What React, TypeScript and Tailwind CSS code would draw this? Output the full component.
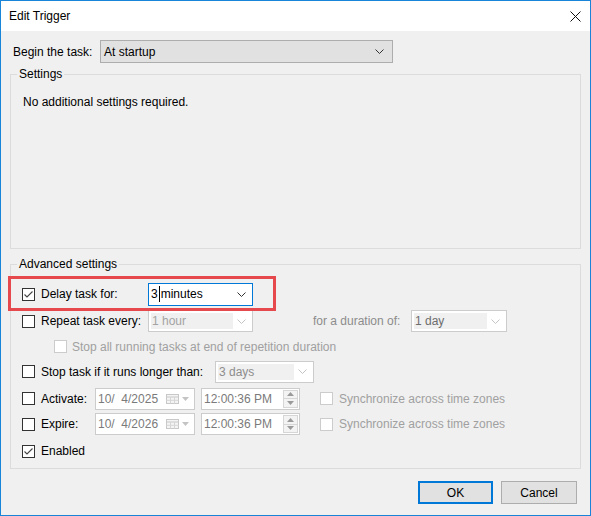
import React from "react";

const font = "font-['Liberation_Sans',Arial,sans-serif]";

function Chevron({ color = "#333" }: { color?: string }) {
  return (
    <svg width="9" height="5" viewBox="0 0 9 5" className="block">
      <polyline points="0.5,0.5 4.5,4.5 8.5,0.5" fill="none" stroke={color} strokeWidth="1" />
    </svg>
  );
}

function Check({ checked = false, disabled = false }: { checked?: boolean; disabled?: boolean }) {
  return (
    <span
      className={`w-[13px] h-[13px] shrink-0 border bg-white flex items-center justify-center ${
        disabled ? "border-[#cccccc]" : "border-[#333333]"
      }`}
    >
      {checked && (
        <svg width="11" height="11" viewBox="0 0 11 11" className="block">
          <polyline points="1.5,5.5 4,8 9.5,2.5" fill="none" stroke="#444" strokeWidth="1.1" />
        </svg>
      )}
    </span>
  );
}

function DisabledCombo({ text, width, color }: { text: string; width: string; color: string }) {
  return (
    <div className={`${width} h-[22px] border border-[#cccccc] bg-white flex items-stretch p-[2px] shrink-0`}>
      <div className="flex-1 bg-[#f0f0f0] flex items-center pl-[1px]" style={{ color }}>
        {text}
      </div>
      <div className="w-[17px] flex items-center justify-center">
        <Chevron color="#c4c4c4" />
      </div>
    </div>
  );
}

function DateBox({ text }: { text: string }) {
  return (
    <div className="w-[100px] h-[22px] border border-[#cccccc] bg-white flex items-center pl-[2px] shrink-0 text-[#7a7a7a]">
      <span className="flex-1 whitespace-pre">{text}</span>
      <svg width="13" height="10" viewBox="0 0 13 10" className="block mr-[1px]">
        <rect x="0.5" y="0.5" width="12" height="9" fill="#f4f4f4" stroke="#c8c8c8" />
        <line x1="0.5" y1="3" x2="12.5" y2="3" stroke="#c8c8c8" />
        <line x1="4.5" y1="3" x2="4.5" y2="9.5" stroke="#d6d6d6" />
        <line x1="8.5" y1="3" x2="8.5" y2="9.5" stroke="#d6d6d6" />
        <line x1="0.5" y1="6.3" x2="12.5" y2="6.3" stroke="#d6d6d6" />
      </svg>
      <svg width="7" height="4" viewBox="0 0 7 4" className="block ml-[2px] mr-[5px]">
        <polygon points="0,0 7,0 3.5,4" fill="#c4c4c4" />
      </svg>
    </div>
  );
}

function TimeBox() {
  return (
    <div className="w-[99px] h-[22px] border border-[#cccccc] bg-white flex items-center pl-[2px] shrink-0 text-[#7a7a7a]">
      <span className="flex-1">12:00:36 PM</span>
      <div className="w-[15px] h-[18px] mr-[1px] flex flex-col">
        <div className="flex-1 border border-[#d6d6d6] bg-[#f3f3f3] flex items-center justify-center">
          <svg width="7" height="4" viewBox="0 0 7 4" className="block">
            <polygon points="0,4 7,4 3.5,0" fill="#9a9a9a" />
          </svg>
        </div>
        <div className="flex-1 border border-t-0 border-[#d6d6d6] bg-[#f3f3f3] flex items-center justify-center">
          <svg width="7" height="4" viewBox="0 0 7 4" className="block">
            <polygon points="0,0 7,0 3.5,4" fill="#9a9a9a" />
          </svg>
        </div>
      </div>
    </div>
  );
}

export default function App() {
  return (
    <div
      className={`${font} relative w-[591px] h-[516px] border border-[#1a84d8] bg-[#f0f0f0] flex flex-col text-[12px] leading-[14px] text-black`}
    >
      {/* title bar */}
      <div className="h-[30px] shrink-0 bg-white flex items-center justify-between pl-[8px] pr-[9px]">
        <span>Edit Trigger</span>
        <svg width="11" height="11" viewBox="0 0 11 11" className="block">
          <path d="M0.5 0.5 L10.5 10.5 M10.5 0.5 L0.5 10.5" stroke="#111" strokeWidth="1" />
        </svg>
      </div>

      <div className="flex-1 px-[9px] flex flex-col">
        <div className="mt-[9px] h-[23px] flex items-center">
          <span className="w-[90px] pl-[3px]">Begin the task:</span>
          <div className="w-[293px] h-[23px] border border-[#adadad] bg-[#e1e1e1] flex items-center pl-[3px]">
            <span className="flex-1">At startup</span>
            <div className="w-[17px] flex justify-center mr-[4px]">
              <Chevron />
            </div>
          </div>
        </div>

        <fieldset className="mt-[4px] h-[182px] border border-[#dcdcdc]">
          <legend className="ml-[6px] px-[2px]">Settings</legend>
          <div className="mt-[14px] pl-[12px]">No additional settings required.</div>
        </fieldset>

        <fieldset className="mt-[8px] h-[212px] border border-[#dcdcdc]">
          <legend className="ml-[6px] px-[2px]">Advanced settings</legend>
          <div className="mt-[10px] pl-[11px] flex flex-col">
            {/* delay */}
            <div className="h-[26px] flex items-center">
              <Check checked />
              <span className="ml-[6px] w-[107px]">Delay task for:</span>
              <div className="w-[105px] h-[23px] border border-[#0078d7] bg-white flex items-center pl-[2px]">
                <span>3</span>
                <span className="w-px h-[16px] bg-black mx-[1px]" />
                <span className="flex-1">minutes</span>
                <div className="w-[17px] flex justify-center mr-[2px]">
                  <Chevron />
                </div>
              </div>
            </div>
            {/* repeat */}
            <div className="h-[28px] flex items-center">
              <Check />
              <span className="ml-[6px] w-[107px]">Repeat task every:</span>
              <DisabledCombo text="1 hour" width="w-[105px]" color="#a3a3a3" />
              <span className="ml-[60px] w-[98px] text-[#8c8c8c]">for a duration of:</span>
              <DisabledCombo text="1 day" width="w-[96px]" color="#6d6d6d" />
            </div>
            {/* stop all */}
            <div className="h-[23px] flex items-center">
              <span className="ml-[32px]">
                <Check disabled />
              </span>
              <span className="ml-[5px] text-[#a0a0a0]">Stop all running tasks at end of repetition duration</span>
            </div>
            {/* stop task */}
            <div className="h-[27px] flex items-center">
              <Check />
              <span className="ml-[6px] w-[174px]">Stop task if it runs longer than:</span>
              <DisabledCombo text="3 days" width="w-[99px]" color="#8d8d8d" />
            </div>
            {/* activate */}
            <div className="h-[27px] flex items-center">
              <Check />
              <span className="ml-[6px] w-[54px]">Activate:</span>
              <DateBox text="10/  4/2025" />
              <span className="ml-[6px]">
                <TimeBox />
              </span>
              <span className="ml-[20px]">
                <Check disabled />
              </span>
              <span className="ml-[6px] text-[#a0a0a0]">Synchronize across time zones</span>
            </div>
            {/* expire */}
            <div className="h-[24px] flex items-center">
              <Check />
              <span className="ml-[6px] w-[54px]">Expire:</span>
              <DateBox text="10/  4/2026" />
              <span className="ml-[6px]">
                <TimeBox />
              </span>
              <span className="ml-[20px]">
                <Check disabled />
              </span>
              <span className="ml-[6px] text-[#a0a0a0]">Synchronize across time zones</span>
            </div>
            {/* enabled */}
            <div className="h-[30px] flex items-center">
              <Check checked />
              <span className="ml-[6px]">Enabled</span>
            </div>
          </div>
        </fieldset>

        <div className="mt-[12px] flex justify-end gap-[8px] pr-[4px]">
          <button className="w-[75px] h-[23px] border-2 border-[#0078d7] bg-[#e1e1e1]">OK</button>
          <button className="w-[76px] h-[23px] border border-[#adadad] bg-[#e1e1e1]">Cancel</button>
        </div>
      </div>

      {/* annotation highlight */}
      <div className="absolute left-[7px] top-[275px] w-[268px] h-[35px] border-[3px] border-[#e5484d]" />
    </div>
  );
}
